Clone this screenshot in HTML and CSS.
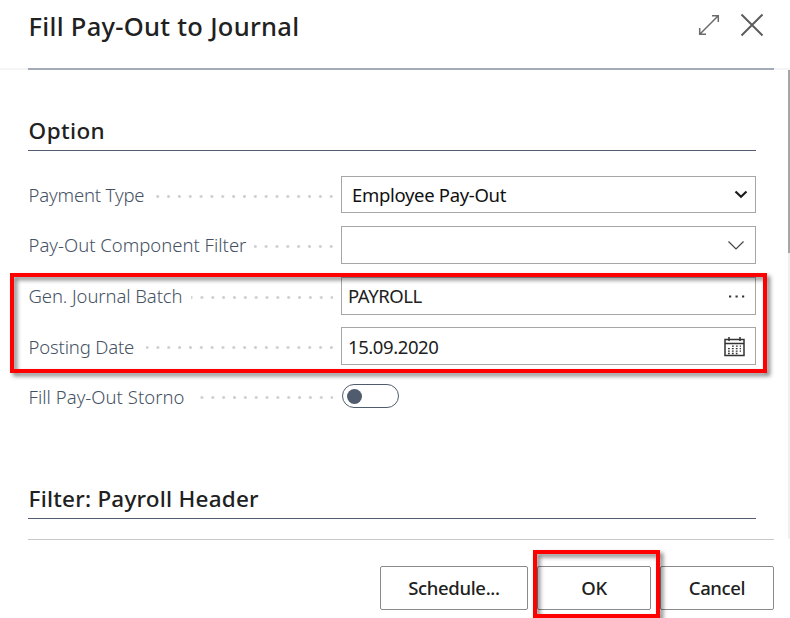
FILE: index.html
```
<!DOCTYPE html>
<html lang="en">
<head>
<meta charset="utf-8">
<title>Fill Pay-Out to Journal</title>
<link rel="stylesheet" href="styles.css">
</head>
<body>
<div class="dialog">
  <header class="header">
    <h1 class="title"><span>Fill Pay-Out to Journal</span></h1>
    <svg class="expand" width="22" height="22" viewBox="0 0 22 22" fill="none" stroke="#6b6b6b" stroke-width="1.5"><path d="M1.5 20.5 20.5 1.5M14 1.7h6.3V8M1.7 14v6.3H8"/></svg>
    <svg class="close" width="24" height="24" viewBox="0 0 24 24" fill="none" stroke="#5c5c5c" stroke-width="2"><path d="M1.5 1.5l21 21M22.500 1.500l-21 21"/></svg>
  </header>
  <div class="rule"><div class="rule-line"></div></div>
  <main class="body">
    <div class="content">
      <h2 class="section first"><span class="t-option">Option</span></h2>
      <div class="row r1"><div class="label"><span class="t-type">Payment Type</span><i class="dots"></i></div>
        <div class="field select"><span class="t-emp">Employee Pay-Out</span><svg width="14" height="9" viewBox="0 0 14 9" fill="none" stroke="#1c1c1c" stroke-width="2.200"><path d="M1.500 1.500 7 6.800l5.500-5.300"/></svg></div></div>
      <div class="row r2"><div class="label"><span class="t-comp">Pay-Out Component Filter</span><i class="dots"></i></div>
        <div class="field lookup"><svg width="18" height="11" viewBox="0 0 18 11" fill="none" stroke="#444" stroke-width="1.200"><path d="M1.500 1.500 9 9l7.500-7.500"/></svg></div></div>
      <div class="row r3"><div class="label"><span class="t-batch">Gen. Journal Batch</span><i class="dots"></i></div>
        <div class="field more"><span class="t-payroll">PAYROLL</span><svg width="16" height="3" viewBox="0 0 16 3" fill="#333"><path d="M0 .5h2.200v2H0zM6.500 .5h2.200v2H6.500zM13 .5h2.200v2H13z"/></svg></div></div>
      <div class="row r4"><div class="label"><span class="t-post">Posting Date</span><i class="dots"></i></div>
        <div class="field date"><span class="t-date">15.09.2020</span><svg width="21" height="20" viewBox="0 0 21 20" fill="none" stroke="#333"><path d="M1 2.500h19v16H1zM1 6.500h19" stroke-width="1.500"/><path d="M5 0v4M16 0v4" stroke-width="1.500"/><path d="M8 9.200h9M4 11.700h13M4 14.200h13M4 16.500h9.500" stroke-width="1.300" stroke-dasharray="1.800 2.100"/></svg></div></div>
      <div class="row r5"><div class="label"><span class="t-storno">Fill Pay-Out Storno</span><i class="dots"></i></div>
        <div class="toggle"><i></i></div></div>
      <h2 class="section second"><span class="t-filter">Filter: Payroll Header</span></h2>
    </div>
    <div class="scroll"><div class="thumb"></div></div>
  </main>
  <footer class="footer">
    <div class="btn schedule"><span class="t-sch">Schedule...</span></div>
    <div class="btn ok"><span class="t-ok">OK</span></div>
    <div class="btn cancel"><span class="t-can">Cancel</span></div>
  </footer>
  <div class="mark mark-fields"></div>
  <div class="mark mark-ok"></div>
</div>
</body>
</html>
```
FILE: styles.css
```
* { box-sizing: border-box; }
body { margin: 0; background: #fff; font-family: "Noto Sans", "Open Sans", sans-serif; color: #212121; }
h1, h2 { margin: 0; font-weight: 500; }
span { white-space: nowrap; }
svg { display: block; flex: none; }
.dialog { position: relative; width: 790px; height: 618px; overflow: hidden; display: flex; flex-direction: column; }
.header { height: 68px; display: flex; align-items: flex-start; padding: 8px 26px 0 28px; }
.title { flex: 1; font-size: 25.5px; line-height: 37px; letter-spacing: .29px; padding-left: .6px; }
.expand { margin: 6px 20px 0 0; }
.close { margin-top: 5px; }
.rule { height: 2px; flex: none; background: #f5f5f6; padding: 0 16px 0 28px; }
.rule-line { height: 2px; background: #a3abb9; }
.body { height: 469px; flex: none; display: flex; justify-content: space-between; padding-left: 28px; }
.content { width: 728px; }
.section { font-size: 22.5px; line-height: 32px; border-bottom: 1px solid #505c6d; padding-left: .6px; letter-spacing: .22px; }
.t-option { letter-spacing: .4px; }
.first { margin-top: 45px; height: 36px; }
.second { margin-top: 74px; height: 37px; padding-top: 1px; }
.row { display: flex; align-items: center; height: 38px; margin-top: 13px; font-size: 18.5px; }
.r1 { height: 37px; margin-top: 25px; }
.r4 { margin-top: 12px; }
.r5 { height: 24px; margin-top: 19px; }
.label { width: 313px; height: 100%; display: flex; align-items: center; color: #465264; font-weight: 350; padding: 0 8px 0 .5px; }
.r2 .label, .r3 .label { padding-bottom: 1px; }
.t-type, .t-post { letter-spacing: -.16px; }
.t-comp { letter-spacing: 0; }
.t-batch { letter-spacing: -.09px; }
.t-storno { letter-spacing: .03px; }
.dots { flex: 1; height: 3px; margin: 3px 0 0 12px; background: radial-gradient(circle at center, #cfcfcf 1.1px, transparent 1.8px) right 0 top 0 / 10.850px 3px repeat-x; background-position: right -4px top 0; }
.r2 .dots, .r3 .dots { margin-left: 8px; }
.field { flex: 1; height: 100%; display: flex; align-items: center; justify-content: space-between; border: 1px solid #a6a6a6; padding: 0 10px 0 6px; letter-spacing: -.42px; }
.more span { padding-bottom: 1px; }
.select { padding: 0 7px 0 10px; letter-spacing: -.32px; }
.select span { color: #111; }
.lookup { justify-content: flex-end; }
.date { padding-right: 10px; }
.date svg { margin-top: 2px; }
.toggle { width: 57px; height: 24px; margin-left: 1px; border: 1.500px solid #505c6d; border-radius: 12px; padding: 4px; }
.toggle i { display: block; width: 15px; height: 15px; border-radius: 50%; background: #505c6d; }
.scroll { width: 2px; background: #f0f0f0; }
.thumb { height: 183px; background: #a6a6a6; }
.footer { height: 79px; flex: none; margin: 0 16px 0 28px; border-top: 1px solid #c8c8c8; padding-top: 26px; display: flex; justify-content: flex-end; gap: 9px; }
.btn { height: 44px; width: 114px; border: 1px solid #8a8a8a; border-radius: 2px; display: flex; align-items: center; justify-content: center; font-size: 18.500px; font-weight: 500; letter-spacing: -.35px; padding-bottom: 2px; }
.schedule { width: 148px; }
.mark { position: absolute; border: 4px solid #f00; filter: drop-shadow(3px 3px 2px rgba(0,0,0,.5)); }
.mark-fields { left: 10px; top: 273px; width: 757px; height: 100px; }
.mark-ok { left: 533px; top: 550px; width: 127px; height: 68px; }
```
